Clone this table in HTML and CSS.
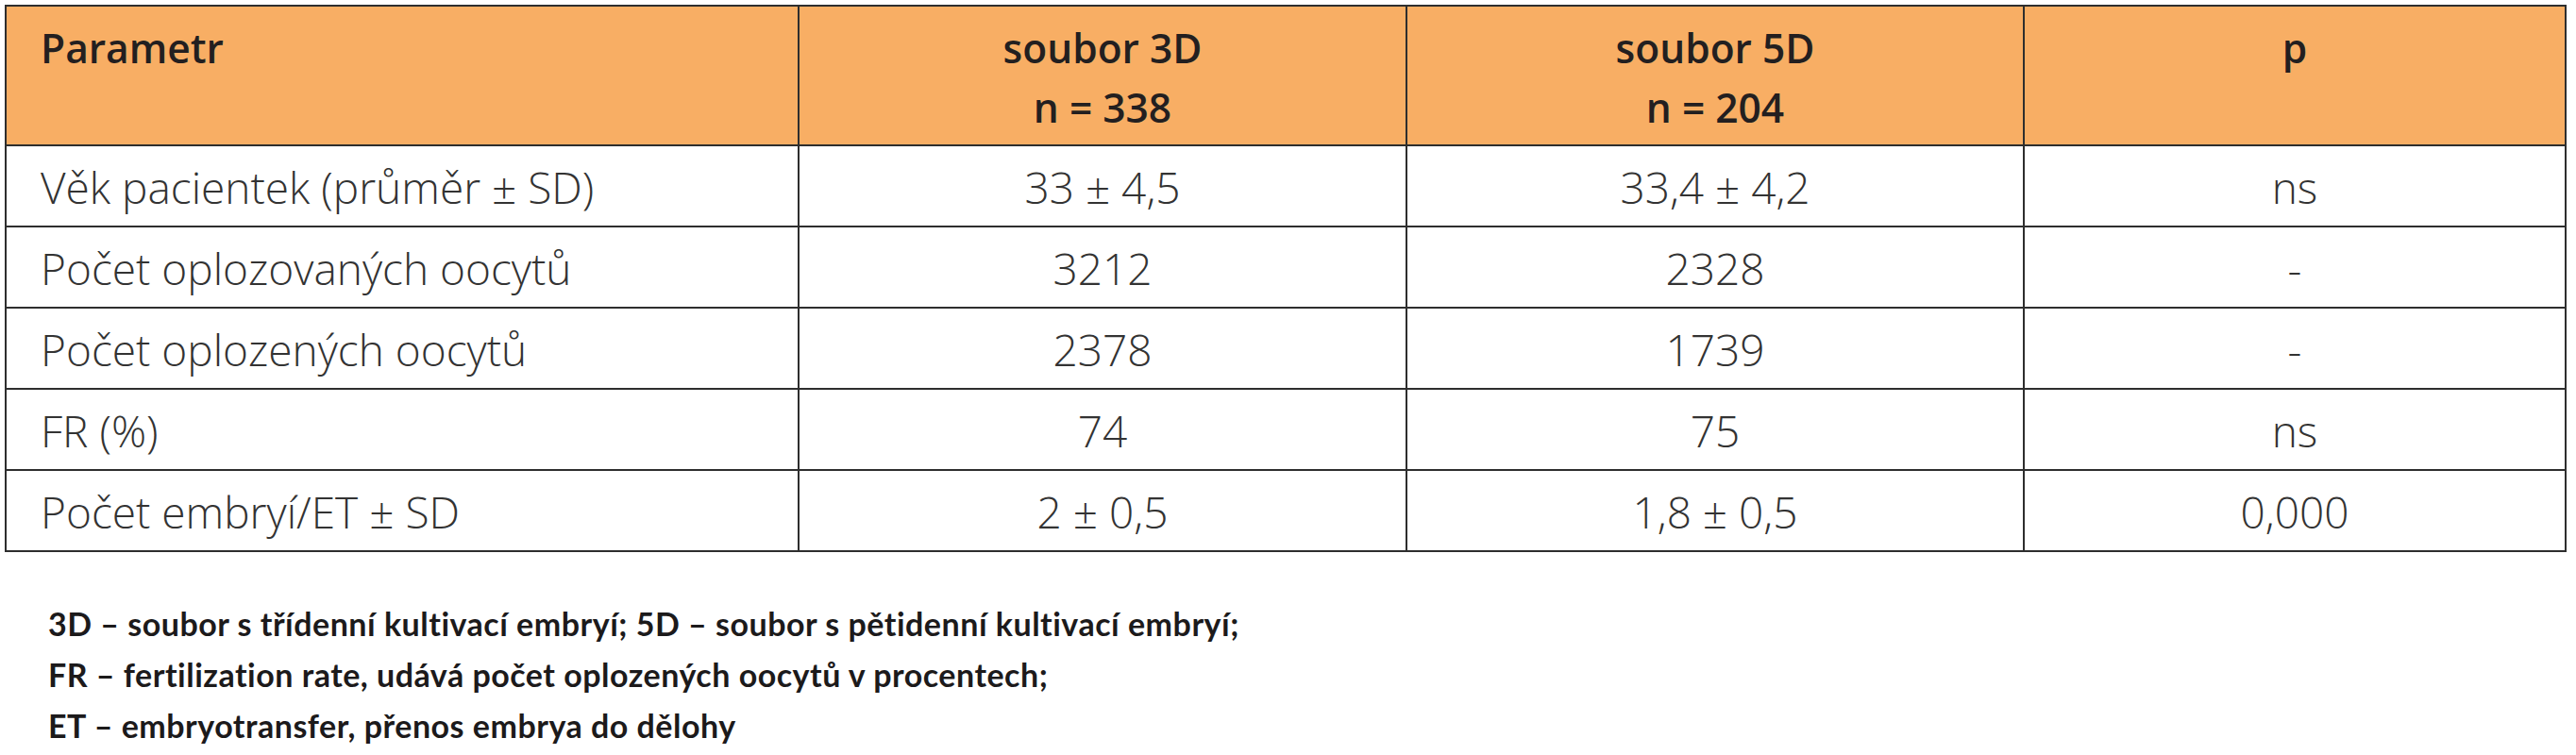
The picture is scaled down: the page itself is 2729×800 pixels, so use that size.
FILE: index.html
```html
<!DOCTYPE html>
<html lang="cs">
<head>
<meta charset="utf-8">
<title>Tabulka</title>
<link rel="stylesheet" href="styles.css">
</head>
<body>
<div class="page">
  <table class="data">
    <colgroup>
      <col class="c-param">
      <col class="c-3d">
      <col class="c-5d">
      <col class="c-p">
    </colgroup>
    <thead>
      <tr>
        <th class="left">Parametr</th>
        <th>soubor 3D<br>n = 338</th>
        <th>soubor 5D<br>n = 204</th>
        <th>p</th>
      </tr>
    </thead>
    <tbody>
      <tr><td class="left">Věk pacientek (průměr ± SD)</td><td>33 ± 4,5</td><td>33,4 ± 4,2</td><td>ns</td></tr>
      <tr><td class="left">Počet oplozovaných oocytů</td><td>3212</td><td>2328</td><td>-</td></tr>
      <tr><td class="left">Počet oplozených oocytů</td><td>2378</td><td>1739</td><td>-</td></tr>
      <tr><td class="left">FR (%)</td><td>74</td><td>75</td><td>ns</td></tr>
      <tr><td class="left">Počet embryí/ET ± SD</td><td>2 ± 0,5</td><td>1,8 ± 0,5</td><td>0,000</td></tr>
    </tbody>
  </table>
  <div class="notes">
    <p>3D – soubor s třídenní kultivací embryí; 5D – soubor s pětidenní kultivací embryí;</p>
    <p>FR – fertilization rate, udává počet oplozených oocytů v procentech;</p>
    <p>ET – embryotransfer, přenos embrya do dělohy</p>
  </div>
</div>
</body>
</html>
```

FILE: styles.css
```css
html, body {
  margin: 0;
  padding: 0;
  background: #ffffff;
}

.page {
  padding: 5px 0 0 5px;
  font-family: "Open Sans", "Liberation Sans", sans-serif;
}

.data {
  border-collapse: collapse;
  table-layout: fixed;
  width: 2712px;
}

.c-param { width: 840px; }
.c-3d { width: 644px; }
.c-5d { width: 654px; }
.c-p { width: 574px; }

.data th,
.data td {
  border: 2px solid #2e2e2e;
  text-align: center;
  vertical-align: top;
  padding-left: 0;
  padding-right: 0;
}

.data th {
  background: #f8ae64;
  color: #231f20;
  font-weight: 600;
  font-size: 42.5px;
  line-height: 63px;
  padding-top: 12px;
  padding-bottom: 8px;
}

.data td {
  color: #333333;
  font-weight: 300;
  font-size: 46px;
  line-height: 60px;
  padding-top: 13px;
  padding-bottom: 11px;
}

.data .left {
  text-align: left;
  padding-left: 36px;
}

.notes {
  margin-top: 49px;
  padding-left: 46px;
  color: #1c1a1b;
  font-family: Lato, "Open Sans", sans-serif;
  font-weight: 700;
  font-size: 34px;
  line-height: 54px;
  letter-spacing: 0.5px;
}

.notes p {
  margin: 0;
}
```
